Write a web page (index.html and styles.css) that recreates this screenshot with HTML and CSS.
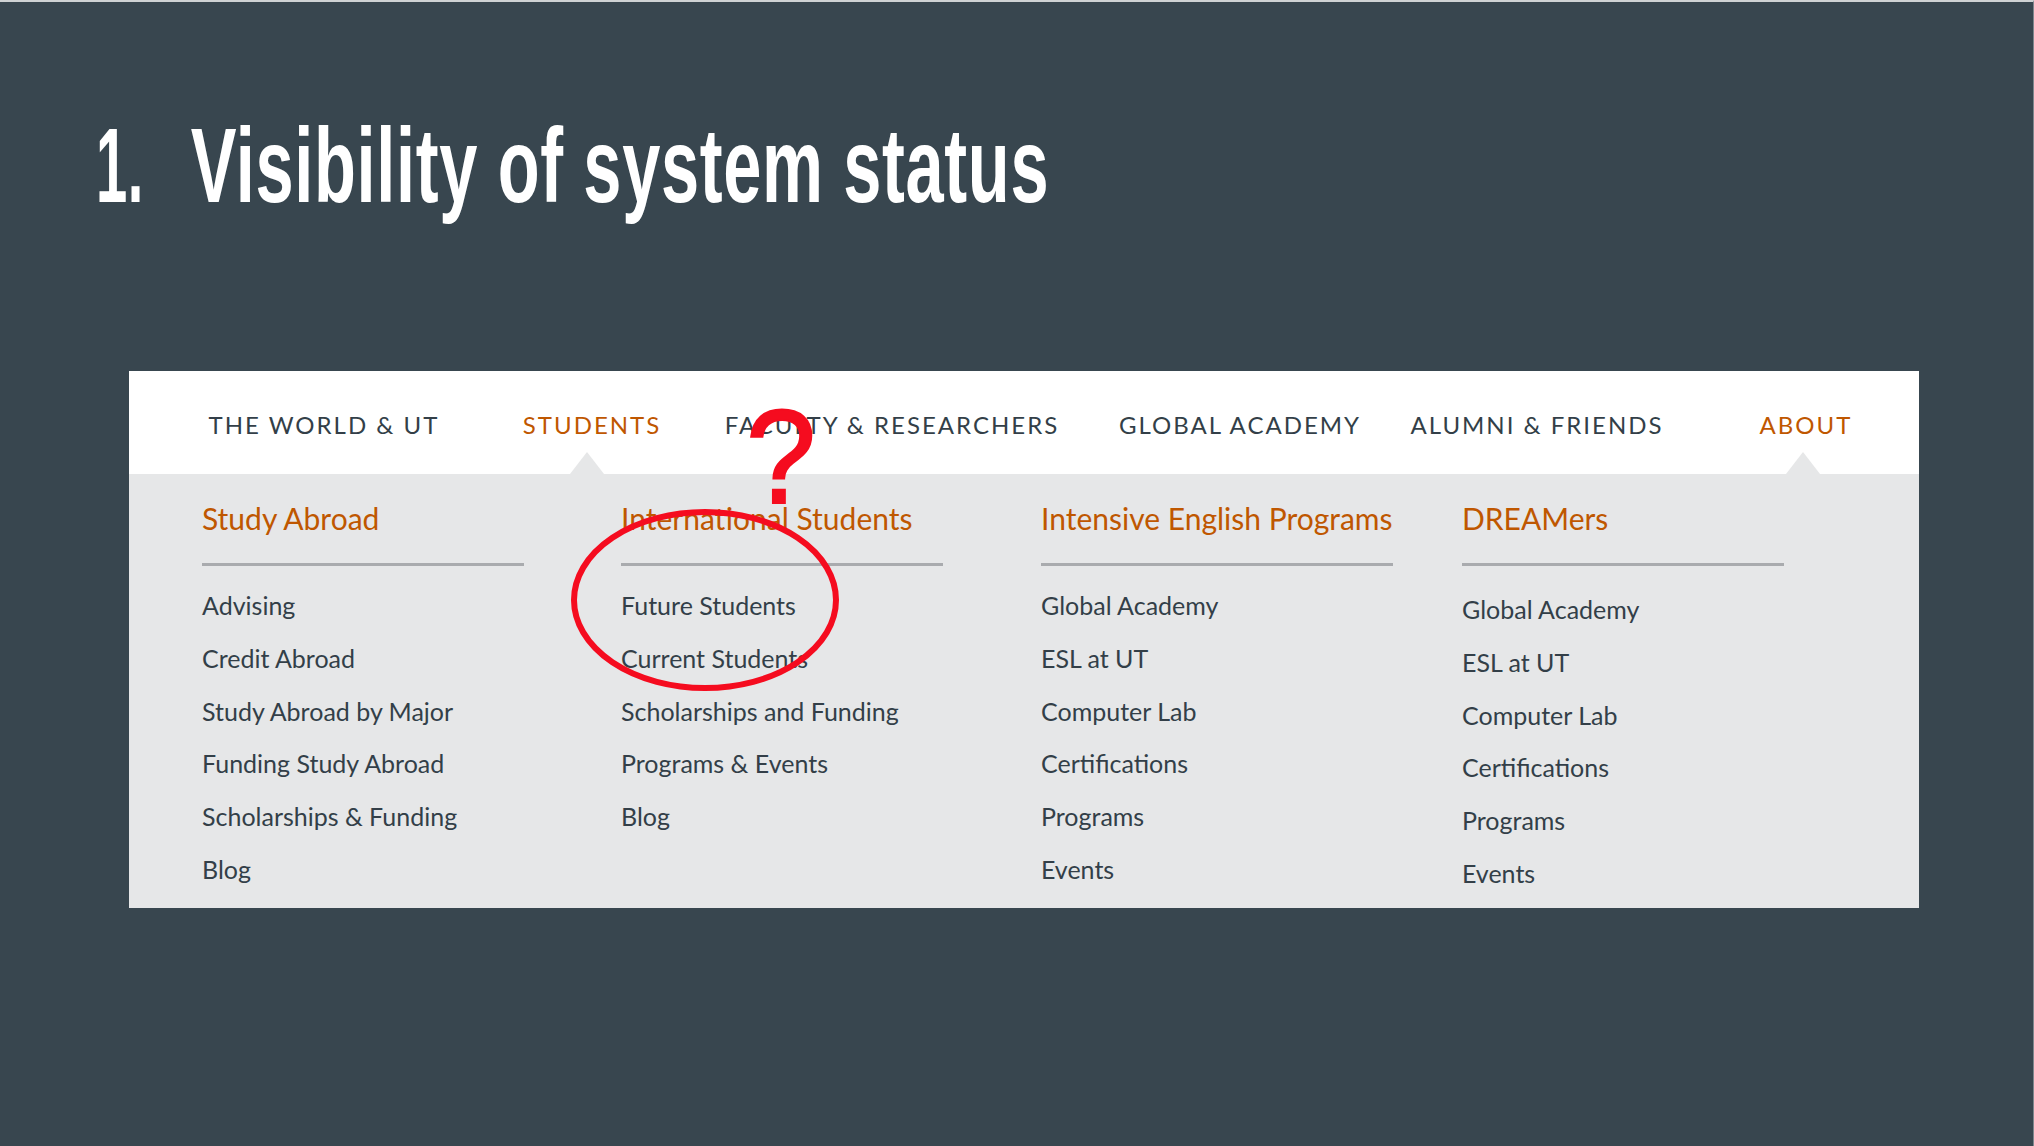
FILE: index.html
```html
<!DOCTYPE html>
<html lang="en">
<head>
<meta charset="utf-8">
<title>Visibility of system status</title>
<link rel="stylesheet" href="styles.css">
</head>
<body>
<div class="slide">
  <h1 class="title"><span class="num">1.</span><span class="text">Visibility of system status</span></h1>

  <div class="panel">
    <ul class="nav">
      <li class="nav-item">THE WORLD &amp; UT</li>
      <li class="nav-item active">STUDENTS</li>
      <li class="nav-item">FACULTY &amp; RESEARCHERS</li>
      <li class="nav-item">GLOBAL ACADEMY</li>
      <li class="nav-item">ALUMNI &amp; FRIENDS</li>
      <li class="nav-item active about">ABOUT</li>
    </ul>

    <div class="dropdown">
      <div class="col">
        <div class="col-head">Study Abroad</div>
        <ul class="links">
          <li>Advising</li>
          <li>Credit Abroad</li>
          <li>Study Abroad by Major</li>
          <li>Funding Study Abroad</li>
          <li>Scholarships &amp; Funding</li>
          <li>Blog</li>
        </ul>
      </div>
      <div class="col">
        <div class="col-head">International Students</div>
        <ul class="links">
          <li>Future Students</li>
          <li>Current Students</li>
          <li>Scholarships and Funding</li>
          <li>Programs &amp; Events</li>
          <li>Blog</li>
        </ul>
      </div>
      <div class="col">
        <div class="col-head">Intensive English Programs</div>
        <ul class="links">
          <li>Global Academy</li>
          <li>ESL at UT</li>
          <li>Computer Lab</li>
          <li>Certifications</li>
          <li>Programs</li>
          <li>Events</li>
        </ul>
      </div>
      <div class="col">
        <div class="col-head">DREAMers</div>
        <ul class="links shifted">
          <li>Global Academy</li>
          <li>ESL at UT</li>
          <li>Computer Lab</li>
          <li>Certifications</li>
          <li>Programs</li>
          <li>Events</li>
        </ul>
      </div>
    </div>

    <svg class="annotation" width="1790" height="537" viewBox="0 0 1790 537">
      <ellipse cx="576" cy="229" rx="131" ry="88" fill="none" stroke="#f50c1f" stroke-width="6"/>
      <text x="617" y="132" class="qmark" textLength="70" lengthAdjust="spacingAndGlyphs">?</text>
    </svg>
  </div>
</div>
</body>
</html>
```

FILE: styles.css
```css
* {
  box-sizing: border-box;
}

html, body {
  margin: 0;
  padding: 0;
}

body {
  width: 2034px;
  height: 1146px;
  overflow: hidden;
  background: #38464f;
}

.slide {
  width: 2034px;
  height: 1146px;
  background: #38464f;
  border-top: 2px solid #cfd2d4;
  border-right: 1px solid #7d878d;
  padding-top: 1px;
}

.title {
  margin: 0 0 0 96px;
  height: 368px;
  padding-top: 103px;
  font-family: "Liberation Sans", Arial, sans-serif;
  font-weight: 700;
  font-size: 105px;
  line-height: 120px;
  color: #ffffff;
  white-space: nowrap;
  transform: scaleX(0.653);
  transform-origin: left top;
  letter-spacing: 1px;
}

.title .num {
  display: inline-block;
  width: 145px;
  transform: scaleX(0.82);
  transform-origin: left center;
}

.panel {
  position: relative;
  margin-left: 129px;
  width: 1790px;
}

.nav {
  list-style: none;
  margin: 0;
  padding: 4px 0 0 61px;
  height: 103px;
  background: #ffffff;
  display: grid;
  grid-template-columns: 268px 268px 332px 364px 230px 308px;
  font-family: Lato, "Source Sans Pro", sans-serif;
  font-size: 24px;
  letter-spacing: 2px;
  color: #333f48;
}

.nav-item {
  position: relative;
  display: flex;
  justify-content: center;
  line-height: 99px;
  white-space: nowrap;
}

.nav-item.active {
  color: #bf5700;
}

.nav-item.active::after {
  content: "";
  position: absolute;
  left: calc(50% - 22px);
  bottom: 0;
  width: 0;
  height: 0;
  border-left: 17px solid transparent;
  border-right: 17px solid transparent;
  border-bottom: 22px solid #e6e7e8;
}

.nav-item.about::after {
  left: calc(50% - 20px);
}

.dropdown {
  background: #e6e7e8;
  height: 434px;
  padding: 25.5px 0 0 73px;
  display: grid;
  grid-template-columns: 419px 420px 421px 1fr;
  font-family: Lato, "Source Sans Pro", sans-serif;
}

.col-head {
  width: max-content;
  min-width: 322px;
  font-size: 30px;
  line-height: 36px;
  color: #bf5700;
  padding-bottom: 27.5px;
  border-bottom: 3px solid #a9abae;
  white-space: nowrap;
}

.links {
  list-style: none;
  margin: 13.2px 0 0;
  padding: 0;
  font-size: 25px;
  line-height: 52.7px;
  color: #333f48;
}

.links.shifted {
  padding-top: 4px;
}

.annotation {
  position: absolute;
  left: 0;
  top: 0;
  pointer-events: none;
  overflow: visible;
}

.qmark {
  font-family: "Liberation Sans", Arial, sans-serif;
  font-size: 133px;
  font-weight: 400;
  fill: #f50c1f;
  stroke: #f50c1f;
  stroke-width: 2px;
}
```
